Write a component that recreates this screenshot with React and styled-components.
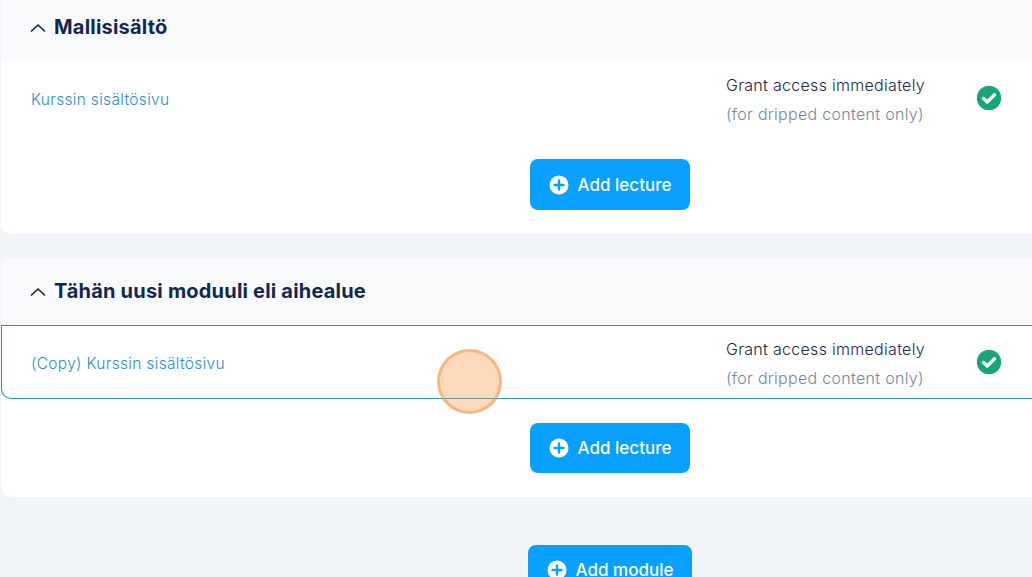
import React from 'react';
import styled, { createGlobalStyle } from 'styled-components';

const GlobalStyle = createGlobalStyle`
	html,
	body {
		margin: 0;
		padding: 0;
		height: 577px;
		overflow: hidden;
		background: #f1f4f9;
	}
`;

const Page = styled.div`
	position: relative;
	width: 1218px;
	height: 577px;
	margin-left: 1px;
`;

// page is scrolled a little, the first header is cut by the top edge
const ModuleList = styled.div`
	display: flex;
	flex-flow: column;
	gap: 24px;
	margin-top: -6px;
`;

const Module = styled.section`
	background: #fff;
	border-radius: 10px;
	padding-bottom: 24px;
`;

const ModuleHeader = styled.header`
	display: flex;
	align-items: center;
	gap: 7px;
	height: 67px;
	padding-left: 28px;
	background: #f8fafc;
	border-radius: 10px 10px 0 0;
	color: #14274e;

	h2 {
		margin: 0;
		font-family: 'Inter', sans-serif;
		font-size: 20px;
		font-weight: 700;
		letter-spacing: 0.2px;
		line-height: 1;
		position: relative;
		top: -1px;
	}
`;

const Chevron = () => (
	<svg width="18" height="18" viewBox="0 0 18 18" fill="none" stroke="#14274e" strokeWidth="1.7" strokeLinecap="round" strokeLinejoin="round">
		<path d="M2.5 12 L9 6 L15.5 12" />
	</svg>
);

const LectureRow = styled.div`
	display: flex;
	align-items: center;
	box-sizing: border-box;
	height: 74px;
	padding-left: 29px;
	border-radius: 0 0 10px 10px;
	border: 1px solid ${(props) => (props.$active ? '#2a96b5' : 'transparent')};
	border-right-color: transparent;
`;

const LectureTitle = styled.a`
	flex: 1;
	margin-top: 2px;
	font-family: 'Inter', sans-serif;
	font-size: 15.5px;
	font-weight: 300;
	letter-spacing: 0.32px;
	color: #2f8ad6;
`;

const Access = styled.div`
	width: 250px;
	margin-top: 3px;
	margin-right: 242px;
	font-family: 'Inter', sans-serif;
	font-size: 16px;
	font-weight: 300;
	line-height: 29px;
	letter-spacing: 0.3px;
	color: #1c2747;

	span {
		display: block;
		color: #7c859c;
	}
`;

const CheckBadge = styled.svg`
	position: absolute;
	left: 975px;
	margin-top: -1px;
`;

const Check = () => (
	<CheckBadge width="26" height="26" viewBox="0 0 26 26">
		<circle cx="13" cy="13" r="12.2" fill="#17a67c" />
		<path d="M7.5 13.5 L11.3 17 L18.5 9.8" fill="none" stroke="#fff" strokeWidth="3.4" strokeLinecap="round" strokeLinejoin="round" />
	</CheckBadge>
);

const ButtonRow = styled.div`
	display: flex;
	justify-content: center;
	margin-top: ${(props) => props.$top || 24}px;
`;

const AddButton = styled.button`
	display: flex;
	align-items: center;
	justify-content: center;
	gap: 9px;
	width: ${(props) => props.$width}px;
	height: ${(props) => props.$height}px;
	padding: 0;
	border: 0;
	border-radius: 8px;
	background: #0aa0ff;
	color: #fff;
	font-family: 'Inter', sans-serif;
	font-size: 17px;
	font-weight: 500;
`;

const PlusIcon = () => (
	<svg width="20" height="20" viewBox="0 0 20 20">
		<circle cx="10" cy="10" r="9.5" fill="#fff" />
		<path d="M10 5.5 V14.5 M5.5 10 H14.5" stroke="#0aa0ff" strokeWidth="2.4" strokeLinecap="round" />
	</svg>
);

const ClickMarker = styled.div`
	position: absolute;
	left: 436px;
	top: 355px;
	box-sizing: border-box;
	width: 65px;
	height: 65px;
	border-radius: 50%;
	background: rgba(251, 146, 60, 0.34);
	border: 3px solid rgba(245, 158, 90, 0.6);
`;

const modules = [
	{ title: 'Mallisisältö', lecture: 'Kurssin sisältösivu', buttonHeight: 51 },
	{ title: 'Tähän uusi moduuli eli aihealue', lecture: '(Copy) Kurssin sisältösivu', active: true, buttonHeight: 50 },
];

const App = () => {
	return (
		<Page>
			<GlobalStyle />
			<ModuleList>
				{modules.map((module, index) => {
					return (
						<Module key={index}>
							<ModuleHeader>
								<Chevron />
								<h2>{module.title}</h2>
							</ModuleHeader>
							<LectureRow $active={module.active}>
								<LectureTitle>{module.lecture}</LectureTitle>
								<Access>
									Grant access immediately
									<span>(for dripped content only)</span>
								</Access>
								<Check />
							</LectureRow>
							<ButtonRow>
								<AddButton $width={160} $height={module.buttonHeight}>
									<PlusIcon />
									Add lecture
								</AddButton>
							</ButtonRow>
						</Module>
					);
				})}
			</ModuleList>
			<ButtonRow $top={48}>
				<AddButton $width={164} $height={50}>
					<PlusIcon />
					Add module
				</AddButton>
			</ButtonRow>
			<ClickMarker />
		</Page>
	);
};

export default App;
